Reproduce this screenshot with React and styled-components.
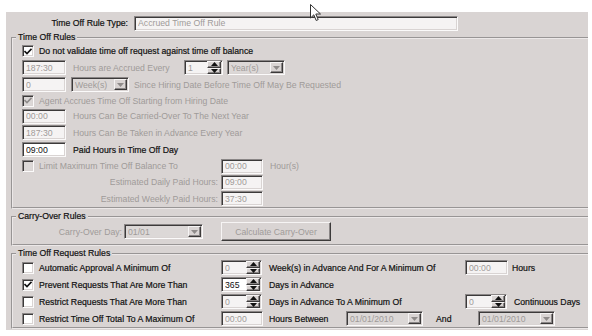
import React from "react";
import styled, { createGlobalStyle } from "styled-components";

const Global = createGlobalStyle`
  html, body { margin: 0; padding: 0; background: #fff; }
  body { font-family: "Liberation Sans", Arial, sans-serif; font-size: 8.7px; color: #111; }
  * { box-sizing: border-box; }
`;

const Page = styled.div`
  position: relative;
  width: 592px;
  height: 336px;
  padding: 12px 4px 6px 6px;
`;

const Panel = styled.div`
  background: #d9d4d3;
  height: 100%;
  padding: 2px 0 0 5px;
  overflow: hidden;
`;

const TitleRow = styled.div`
  display: flex;
  align-items: center;
  height: 18px;
`;

const Group = styled.fieldset`
  margin: ${p => p.$mt || 0}px 0 0 0;
  padding: 0 0 ${p => p.$pb || 0}px 0;
  border: 2px groove #ece8e8;
  border-right: none;
  min-width: 0;
`;

const Legend = styled.legend`
  margin-left: 3px;
  padding: 0 2px;
  line-height: 11px;
  color: #111;
  -webkit-text-stroke: 0.2px #111;
`;

const Row = styled.div`
  display: flex;
  align-items: center;
  height: ${p => p.$h || 17}px;
  padding-left: 9px;
`;

const Cell = styled.div`
  display: flex;
  align-items: center;
  justify-content: ${p => (p.$right ? "flex-end" : "flex-start")};
  width: ${p => p.$w}px;
  margin-left: ${p => p.$ml || 0}px;
  flex: none;
`;

const Text = styled.span`
  white-space: nowrap;
  margin-left: ${p => p.$ml || 0}px;
  color: ${p => (p.$dis ? "#9f9b99" : "#111")};
  -webkit-text-stroke: ${p => (p.$dis ? "0" : "0.2px #111")};
`;

const sunken = `
  border-top: 1px solid #8a8686;
  border-left: 1px solid #8a8686;
  border-bottom: 1px solid #fbfafa;
  border-right: 1px solid #fbfafa;
  box-shadow: inset 1px 1px 0 #3c3a3a, inset -1px -1px 0 #d9d4d3;
`;

const raised = `
  background: #d9d4d3;
  border-top: 1px solid #f6f4f4;
  border-left: 1px solid #f6f4f4;
  border-bottom: 1px solid #3c3a3a;
  border-right: 1px solid #3c3a3a;
  box-shadow: inset -1px -1px 0 #8a8686;
`;

const Box = styled.div`
  ${sunken}
  display: flex;
  align-items: center;
  width: ${p => p.$w}px;
  height: ${p => p.$h || 15}px;
  margin-left: ${p => p.$ml || 0}px;
  padding-left: 3px;
  background: ${p => (p.$grey ? "#dcd8d7" : p.$dis ? "#f5f3f3" : "#fff")};
  color: ${p => (p.$dis ? "#9f9b99" : "#111")};
  flex: none;
  position: relative;
  white-space: nowrap;
`;

const BoxText = styled.span`
  flex: 1;
  overflow: hidden;
`;

const SpinCol = styled.div`
  display: flex;
  flex-direction: column;
  width: 14px;
  height: 13px;
  margin-right: 1px;
`;

const SpinBtn = styled.div`
  ${raised}
  flex: 1;
  display: flex;
  align-items: center;
  justify-content: center;
`;

const DropBtn = styled.div`
  ${raised}
  width: 13px;
  height: 11px;
  margin-right: 1px;
  display: flex;
  align-items: center;
  justify-content: center;
`;

const Button = styled.div`
  ${raised}
  width: ${p => p.$w}px;
  height: 19px;
  margin-left: ${p => p.$ml || 0}px;
  display: flex;
  align-items: center;
  justify-content: center;
  color: #9f9b99;
`;

const CheckBox = styled.div`
  ${sunken}
  width: 12px;
  height: 12px;
  flex: none;
  background: ${p => (p.$dis ? "#dcd8d7" : "#fff")};
  display: flex;
  align-items: center;
  justify-content: center;
`;

const Cursor = styled.svg`
  position: absolute;
  left: 310px;
  top: 4px;
`;

const Tri = ({ up, dis }) => (
  <svg width="7" height="4" viewBox="0 0 7 4">
    <path d={up ? "M0 4 L3.5 0 L7 4Z" : "M0 0 L3.5 4 L7 0Z"} fill={dis ? "#8f8b8a" : "#111"} />
  </svg>
);

const Field = ({ w, value, dis, grey, ml }) => (
  <Box $w={w} $dis={dis} $grey={grey} $ml={ml}>
    <BoxText>{value}</BoxText>
  </Box>
);

const Spinner = ({ w, value, dis, ml }) => (
  <Box $w={w} $dis={dis} $ml={ml}>
    <BoxText>{value}</BoxText>
    <SpinCol>
      <SpinBtn><Tri up /></SpinBtn>
      <SpinBtn><Tri /></SpinBtn>
    </SpinCol>
  </Box>
);

const Combo = ({ w, value, ml }) => (
  <Box $w={w} $dis $grey $ml={ml}>
    <BoxText>{value}</BoxText>
    <DropBtn><Tri dis /></DropBtn>
  </Box>
);

const Check = ({ checked, dis }) => (
  <CheckBox $dis={dis}>
    {checked && (
      <svg width="8" height="7" viewBox="0 0 8 7">
        <path d="M0.5 3 L3 5.5 L7.5 0.8" stroke={dis ? "#8f8b8a" : "#111"} strokeWidth="1.6" fill="none" />
      </svg>
    )}
  </CheckBox>
);

const CheckLabel = ({ checked, dis, label, w }) => (
  <Cell $w={w}>
    <Check checked={checked} dis={dis} />
    <Text $dis={dis} $ml={5}>{label}</Text>
  </Cell>
);

export default function App() {
  return (
    <Page>
      <Global />
      <Panel>
        <TitleRow>
          <Cell $w={117} $right><Text>Time Off Rule Type:</Text></Cell>
          <Field w={324} ml={6} value="Accrued Time Off Rule" dis />
        </TitleRow>

        <Group>
          <Legend>Time Off Rules</Legend>
          <Row $h={16}><CheckLabel checked label="Do not validate time off request against time off balance" /></Row>
          <Row>
            <Field w={44} value="187:30" dis />
            <Cell $w={111} $ml={7}><Text $dis>Hours are Accrued Every</Text></Cell>
            <Spinner w={39} value="1" dis />
            <Combo w={58} ml={4} value="Year(s)" />
          </Row>
          <Row>
            <Field w={44} value="0" dis />
            <Combo w={58} ml={5} value="Week(s)" />
            <Text $dis $ml={5}>Since Hiring Date Before Time Off May Be Requested</Text>
          </Row>
          <Row $h={15}><CheckLabel checked dis label="Agent Accrues Time Off Starting from Hiring Date" /></Row>
          <Row $h={16}>
            <Field w={44} value="00:00" dis />
            <Text $dis $ml={7}>Hours Can Be Carried-Over To The Next Year</Text>
          </Row>
          <Row>
            <Field w={44} value="187:30" dis />
            <Text $dis $ml={7}>Hours Can Be Taken in Advance Every Year</Text>
          </Row>
          <Row>
            <Field w={44} value="09:00" />
            <Text $ml={7}>Paid Hours in Time Off Day</Text>
          </Row>
          <Row $h={16}>
            <CheckLabel w={199} dis label="Limit Maximum Time Off Balance To" />
            <Field w={42} value="00:00" dis />
            <Text $dis $ml={7}>Hour(s)</Text>
          </Row>
          <Row $h={16}>
            <Cell $w={196} $right><Text $dis>Estimated Daily Paid Hours:</Text></Cell>
            <Field w={42} ml={3} value="09:00" dis />
          </Row>
          <Row>
            <Cell $w={196} $right><Text $dis>Estimated Weekly Paid Hours:</Text></Cell>
            <Field w={42} ml={3} value="37:30" dis />
          </Row>
        </Group>

        <Group $mt={2} $pb={3}>
          <Legend>Carry-Over Rules</Legend>
          <Row $h={19}>
            <Cell $w={100} $right><Text $dis>Carry-Over Day:</Text></Cell>
            <Combo w={79} ml={2} value="01/01" />
            <Button $w={110} $ml={18}>Calculate Carry-Over</Button>
          </Row>
        </Group>

        <Group $mt={2}>
          <Legend>Time Off Request Rules</Legend>
          <Row>
            <CheckLabel w={199} label="Automatic Approval A Minimum Of" />
            <Spinner w={41} value="0" dis />
            <Cell $w={196} $ml={7}><Text>Week(s) in Advance And For A Minimum Of</Text></Cell>
            <Field w={43} value="00:00" dis />
            <Text $ml={4}>Hours</Text>
          </Row>
          <Row>
            <CheckLabel w={199} checked label="Prevent Requests That Are More Than" />
            <Spinner w={41} value="365" />
            <Cell $w={196} $ml={7}><Text>Days in Advance</Text></Cell>
          </Row>
          <Row>
            <CheckLabel w={199} label="Restrict Requests That Are More Than" />
            <Spinner w={41} value="0" dis />
            <Cell $w={196} $ml={7}><Text>Days in Advance To A Minimum Of</Text></Cell>
            <Spinner w={42} value="0" dis />
            <Text $ml={7}>Continuous Days</Text>
          </Row>
          <Row>
            <CheckLabel w={199} label="Restrict Time Off Total To A Maximum Of" />
            <Field w={42} value="00:00" dis />
            <Cell $w={77} $ml={6}><Text>Hours Between</Text></Cell>
            <Combo w={77} value="01/01/2010" />
            <Cell $w={42} $ml={13}><Text>And</Text></Cell>
            <Combo w={77} value="01/01/2010" />
          </Row>
        </Group>
      </Panel>
      <Cursor width="12" height="18" viewBox="0 0 12 18">
        <path d="M0.5 0.5 L0.5 14 L3.8 10.8 L6.2 16.5 L8.2 15.6 L5.8 10 L10.5 10 Z" fill="#fff" stroke="#333" strokeWidth="1" />
      </Cursor>
    </Page>
  );
}
